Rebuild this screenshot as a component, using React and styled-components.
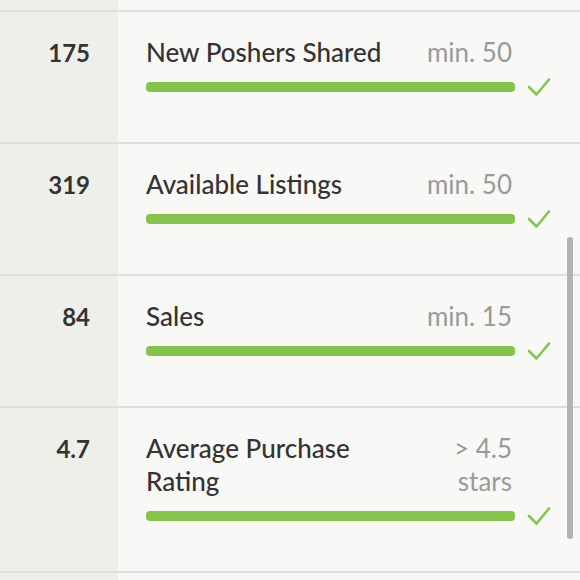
import React from "react";
import styled, { createGlobalStyle } from "styled-components";

const Global = createGlobalStyle`
  html, body { margin: 0; padding: 0; background: #f8f8f6; }
  body { font-family: Lato, "Open Sans", sans-serif; -webkit-font-smoothing: antialiased; }
`;

const Page = styled.div`
  position: relative;
  width: 580px;
  height: 580px;
  overflow: hidden;
  background: #f8f8f6;
`;

const Edge = styled.div`
  display: grid;
  grid-template-columns: 118px 1fr;
  height: ${(p) => p.$h}px;
  box-sizing: border-box;
  border-top: ${(p) => (p.$line ? "2px solid #dededb" : "none")};
  &::before { content: ""; background: #efefea; }
`;

const Row = styled.div`
  display: grid;
  grid-template-columns: 118px 1fr;
  box-sizing: border-box;
  border-top: 2px solid #dededb;
`;

const NumCell = styled.div`
  background: #efefea;
  text-align: right;
  padding: 24px 28px 0 0;
  font-size: 24px;
  font-weight: 700;
  color: #333333;
  line-height: 33px;
`;

const Body = styled.div`
  padding: 24px 0 0 28px;
  display: grid;
  grid-template-columns: 1fr auto;
  align-items: start;
`;

const Label = styled.div`
  font-size: 26px;
  font-weight: 500;
  color: #333333;
  line-height: 33px;
`;

const Req = styled.div`
  font-size: 26px;
  color: #9a9a98;
  text-align: right;
  line-height: 33px;
  margin-right: 68px;
`;

const BarLine = styled.div`
  grid-column: 1 / span 2;
  display: flex;
  align-items: center;
  gap: 12px;
  margin: 8px 0 0;
  padding-bottom: 45px;
`;

const Bar = styled.div`
  width: 369px;
  height: 10px;
  border-radius: 4px;
  background: #84c44a;
`;

const Check = styled.svg`
  width: 24px;
  height: 20px;
`;

const Scroll = styled.div`
  position: absolute;
  left: 567px;
  top: 237px;
  width: 6px;
  height: 302px;
  border-radius: 3px;
  background: #b3b3b1;
`;

const rows = [
  { n: "175", label: "New Poshers Shared", req: "min. 50" },
  { n: "319", label: "Available Listings", req: "min. 50" },
  { n: "84", label: "Sales", req: "min. 15" },
  { n: "4.7", label: <>Average Purchase<br />Rating</>, req: <>&gt; 4.5<br />stars</> },
];

export default function App() {
  return (
    <Page>
      <Global />
      <Edge $h={10} />
      {rows.map((r, i) => (
        <Row key={i}>
          <NumCell>{r.n}</NumCell>
          <Body>
            <Label>{r.label}</Label>
            <Req>{r.req}</Req>
            <BarLine>
              <Bar />
              <Check viewBox="0 0 24 20">
                <path d="M2 10 L9.5 17.5 L22 2.5" fill="none" stroke="#84c44a" strokeWidth="2.6" strokeLinecap="round" strokeLinejoin="round" />
              </Check>
            </BarLine>
          </Body>
        </Row>
      ))}
      <Edge $h={20} $line />
      <Scroll />
    </Page>
  );
}
